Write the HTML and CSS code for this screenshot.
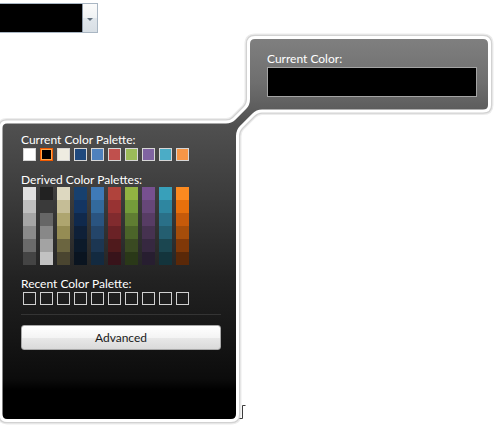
FILE: index.html
```html
<!DOCTYPE html>
<html>
<head>
<meta charset="utf-8">
<link rel="stylesheet" href="styles.css">
</head>
<body>
<div class="stage">
  <svg class="bg" width="495" height="429" viewBox="0 0 495 429">
    <defs>
      <linearGradient id="fillg" gradientUnits="userSpaceOnUse" x1="0" y1="37" x2="0" y2="421">
        <stop offset="0" stop-color="#808080"/>
        <stop offset="0.12" stop-color="#6e6e6e"/>
        <stop offset="0.19" stop-color="#5c5c5c"/>
        <stop offset="0.23" stop-color="#505050"/>
        <stop offset="0.42" stop-color="#3b3b3b"/>
        <stop offset="0.63" stop-color="#222222"/>
        <stop offset="0.79" stop-color="#151515"/>
        <stop offset="0.89" stop-color="#0c0c0c"/>
        <stop offset="0.92" stop-color="#000000"/>
        <stop offset="1" stop-color="#000000"/>
      </linearGradient>
    </defs>
    <path class="halo1" d="M255 37.5 L483 37.5 Q489.5 37.5 489.5 44 L489.5 105 Q489.5 111 483 111 L262 111 Q257 111 253 115 L241 127 Q237.5 130.5 237.5 136 L237.5 414 Q237.5 420.5 231 420.5 L7 420.5 Q1 420.5 1 414 L1 128 Q1 122 7 122 L226 122 Q231 122 234 119 L245 108 Q248.5 104.5 248.5 99 L248.5 44 Q248.5 37.5 255 37.5 Z"/>
    <path class="halo2" d="M255 37.5 L483 37.5 Q489.5 37.5 489.5 44 L489.5 105 Q489.5 111 483 111 L262 111 Q257 111 253 115 L241 127 Q237.5 130.5 237.5 136 L237.5 414 Q237.5 420.5 231 420.5 L7 420.5 Q1 420.5 1 414 L1 128 Q1 122 7 122 L226 122 Q231 122 234 119 L245 108 Q248.5 104.5 248.5 99 L248.5 44 Q248.5 37.5 255 37.5 Z"/>
    <path class="shape" fill="url(#fillg)" d="M255 37.5 L483 37.5 Q489.5 37.5 489.5 44 L489.5 105 Q489.5 111 483 111 L262 111 Q257 111 253 115 L241 127 Q237.5 130.5 237.5 136 L237.5 414 Q237.5 420.5 231 420.5 L7 420.5 Q1 420.5 1 414 L1 128 Q1 122 7 122 L226 122 Q231 122 234 119 L245 108 Q248.5 104.5 248.5 99 L248.5 44 Q248.5 37.5 255 37.5 Z"/>
    <path class="bracket" d="M245.5 405.5 L242.5 405.5 L242.5 418.5 L239.5 418.5"/>
  </svg>

  <div class="combo">
    <div class="combo-value"></div>
    <div class="combo-btn"><span class="arrow"></span></div>
  </div>

  <div class="current">
    <div class="label">Current Color:</div>
    <div class="current-box"></div>
  </div>

  <div class="panel">
    <div class="label">Current Color Palette:</div>
    <div class="row">
      <span class="sw" style="background:#ffffff"></span>
      <span class="sw selected" style="background:#000000"></span>
      <span class="sw" style="background:#eeece1"></span>
      <span class="sw" style="background:#1f497d"></span>
      <span class="sw" style="background:#4f81bd"></span>
      <span class="sw" style="background:#c0504d"></span>
      <span class="sw" style="background:#9bbb59"></span>
      <span class="sw" style="background:#8064a2"></span>
      <span class="sw" style="background:#4bacc6"></span>
      <span class="sw" style="background:#f79646"></span>
    </div>

    <div class="label gap">Derived Color Palettes:</div>
    <div class="derived">
      <div class="col">
        <span style="background:#e0e0e0"></span><span style="background:#bfbfbf"></span><span style="background:#a5a5a5"></span><span style="background:#8a8a8a"></span><span style="background:#6a6a6a"></span><span style="background:#444444"></span>
      </div>
      <div class="col">
        <span style="background:#222222"></span><span style="background:#3a3a3a"></span><span style="background:#666666"></span><span style="background:#888888"></span><span style="background:#a3a3a3"></span><span style="background:#c2c2c2"></span>
      </div>
      <div class="col">
        <span style="background:#ddd8c0"></span><span style="background:#c5bd96"></span><span style="background:#aea56f"></span><span style="background:#958c54"></span><span style="background:#6b6540"></span><span style="background:#4a4530"></span>
      </div>
      <div class="col">
        <span style="background:#17406e"></span><span style="background:#133562"></span><span style="background:#10294c"></span><span style="background:#0f2038"></span><span style="background:#0c1a2a"></span><span style="background:#0a1420"></span>
      </div>
      <div class="col">
        <span style="background:#3f7ab8"></span><span style="background:#336a9c"></span><span style="background:#2a5480"></span><span style="background:#244569"></span><span style="background:#1c3652"></span><span style="background:#132a40"></span>
      </div>
      <div class="col">
        <span style="background:#b0433c"></span><span style="background:#983333"></span><span style="background:#812b2e"></span><span style="background:#6a2226"></span><span style="background:#4f1a1c"></span><span style="background:#38131a"></span>
      </div>
      <div class="col">
        <span style="background:#91b342"></span><span style="background:#749c3a"></span><span style="background:#5f7d32"></span><span style="background:#4b6429"></span><span style="background:#3a4a22"></span><span style="background:#2a3818"></span>
      </div>
      <div class="col">
        <span style="background:#77508f"></span><span style="background:#664778"></span><span style="background:#573c64"></span><span style="background:#463250"></span><span style="background:#362840"></span><span style="background:#271e30"></span>
      </div>
      <div class="col">
        <span style="background:#38a0ba"></span><span style="background:#2e86a0"></span><span style="background:#2a7088"></span><span style="background:#245e70"></span><span style="background:#1b4650"></span><span style="background:#13343c"></span>
      </div>
      <div class="col">
        <span style="background:#fc8a20"></span><span style="background:#e8700c"></span><span style="background:#c65a0a"></span><span style="background:#a54d0a"></span><span style="background:#803808"></span><span style="background:#5a2808"></span>
      </div>
    </div>

    <div class="label gap">Recent Color Palette:</div>
    <div class="row">
      <span class="sw empty"></span><span class="sw empty"></span><span class="sw empty"></span><span class="sw empty"></span><span class="sw empty"></span><span class="sw empty"></span><span class="sw empty"></span><span class="sw empty"></span><span class="sw empty"></span><span class="sw empty"></span>
    </div>

    <div class="sep"></div>
    <button class="adv">Advanced</button>
  </div>
</div>
</body>
</html>
```

FILE: styles.css
```css
html, body {
  margin: 0;
  padding: 0;
  background: #ffffff;
}

.stage {
  position: relative;
  width: 495px;
  height: 429px;
  overflow: hidden;
  font-family: "Lato", "Noto Sans", sans-serif;
  font-size: 12px;
  display: flex;
  flex-direction: column;
  align-items: flex-start;
}

.bg {
  position: absolute;
  left: 0;
  top: 0;
  z-index: 0;
}

.halo1 {
  fill: none;
  stroke: #ececec;
  stroke-width: 8;
}

.halo2 {
  fill: none;
  stroke: #d2d2d2;
  stroke-width: 5.5;
}

.shape {
  stroke: #ffffff;
  stroke-width: 3;
}

.bracket {
  fill: none;
  stroke: #3c3c3c;
  stroke-width: 1;
}

.combo, .current, .panel {
  position: relative;
  z-index: 1;
}

.combo {
  display: flex;
  margin-top: 3px;
  width: 98px;
  height: 30px;
  box-sizing: border-box;
  border: 1px solid #a9b6c3;
  border-left: none;
}

.combo-value {
  flex: 1;
  background: #000000;
  border-right: 1px solid #8e9aa8;
}

.combo-btn {
  width: 14px;
  background: linear-gradient(#fbfbfb 0%, #eff2f4 50%, #e0e6eb 51%, #d8dfe5 100%);
  display: flex;
  align-items: center;
  justify-content: center;
}

.arrow {
  width: 0;
  height: 0;
  border-left: 3px solid transparent;
  border-right: 3px solid transparent;
  border-top: 3px solid #62707e;
  margin-top: 2px;
}

.label {
  color: #ffffff;
  line-height: 15px;
  height: 15px;
  white-space: nowrap;
}

.current {
  margin-top: 18px;
  margin-left: 267px;
  width: 210px;
}

.current .label {
  line-height: 16px;
  height: 16px;
}

.current-box {
  height: 30px;
  box-sizing: border-box;
  border: 1px solid #a4a4a4;
  background: #000000;
}

.panel {
  margin-top: 35px;
  margin-left: 21px;
  width: 200px;
  display: flex;
  flex-direction: column;
}

.label.gap {
  margin-top: 11px;
}

.row {
  display: flex;
  gap: 4px;
  margin-top: 1px;
  margin-left: 2px;
}

.sw {
  display: block;
  width: 13px;
  height: 13px;
  box-sizing: border-box;
  border: 1px solid #d6d6d6;
}

.sw.selected {
  border: 1px solid #f25a00;
  box-shadow: inset 0 0 0 1px #ffa64a;
}

.sw.empty {
  background: transparent;
  border: 1px solid #d0d0d0;
}

.derived {
  display: flex;
  gap: 4px;
  margin-left: 2px;
}

.col {
  display: flex;
  flex-direction: column;
}

.col span {
  display: block;
  width: 13px;
  height: 13px;
}

.sep {
  margin-top: 9px;
  height: 1px;
  background: #343434;
  width: 200px;
}

.adv {
  margin-top: 10px;
  width: 200px;
  height: 25px;
  box-sizing: border-box;
  border: 1px solid #a8a8a8;
  border-radius: 3px;
  background: linear-gradient(#ffffff 0%, #f4f4f4 50%, #e8e8e8 52%, #dadada 100%);
  font-family: "Lato", "Noto Sans", sans-serif;
  font-size: 12px;
  color: #1a1a1a;
  padding: 0;
}
```
